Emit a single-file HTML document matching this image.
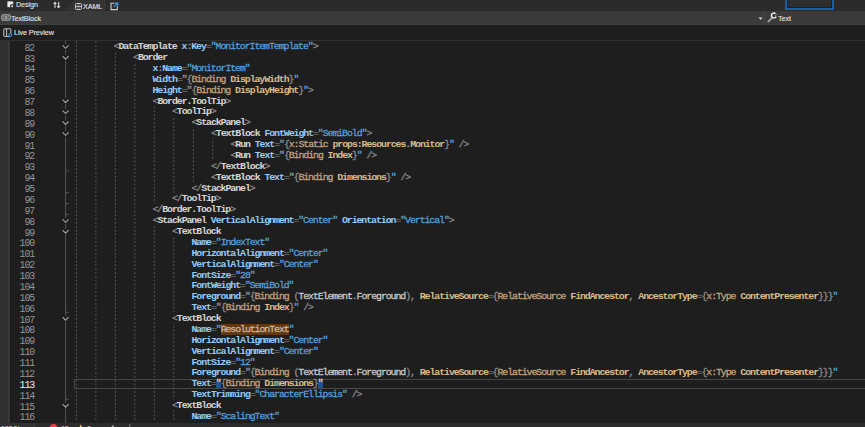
<!DOCTYPE html>
<html><head><meta charset="utf-8"><style>
*{margin:0;padding:0;box-sizing:border-box}
body{width:865px;height:427px;overflow:hidden;background:#1e1e1e;position:relative;font-family:"Liberation Sans",sans-serif}
.abs{position:absolute}
.ui{white-space:pre;font-family:"Liberation Sans",sans-serif;transform:scaleX(0.9);transform-origin:0 0;-webkit-text-stroke:0.12px currentColor}
.code{position:absolute;font-family:"Liberation Mono",monospace;font-size:9.900px;letter-spacing:-1.070px;font-weight:normal;white-space:pre;color:#c8c8c8;transform:scaleY(1.0);transform-origin:0 8px;-webkit-text-stroke:0.3px currentColor}
.ln{position:absolute;height:10.88px;line-height:10.88px}
.num{position:absolute;left:0;width:34.2px;font-family:"Liberation Mono",monospace;font-size:9.900px;letter-spacing:-1.070px;color:#858585;text-align:right;white-space:pre;transform:scaleY(1.12);transform-origin:0 8.1px}
.a,.n,.p{font-weight:bold;-webkit-text-stroke:0.05px currentColor}.d{color:#8a8a8a}.e{color:#6a6a6a}.n{color:#d4d4d4}.a{color:#92caf4}.v{color:#569cd6}.q{color:#569cd6}.b{color:#8c8c8c}.c{color:#c2a07e}.qg{color:#959595}.p{color:#d7b98a}.t{color:#c8c8c8}
.hl{background:#613712;color:#c8b6a4}
.qh{background:linear-gradient(to bottom,transparent 2.7px,#1c5590 2.7px,#1c5590 9.9px,transparent 9.9px);color:#d4d4d4}
.g{position:absolute;width:1px;background:repeating-linear-gradient(to bottom,#4a4a4a 0,#4a4a4a 2px,transparent 2px,transparent 4px)}
</style></head><body>
<div class="abs" style="left:0;top:0;width:865px;height:10.5px;background:#2b2b2b"></div>
<svg class="abs" style="left:0;top:0" width="865" height="11"><path d="M64 10.5 L75.5 0 L105.6 0 L105.6 10.5 Z" fill="#353535"/></svg>
<div class="abs" style="left:0;top:10.5px;width:865px;height:14.1px;background:#3a3a3a"></div>
<div class="abs" style="left:0;top:24.6px;width:865px;height:15.4px;background:#1f1f1f"></div>
<div class="abs" style="left:0;top:23.6px;width:865px;height:1px;background:#404040"></div>
<div class="abs" style="left:0;top:40px;width:865px;height:1px;background:#303030"></div>
<div class="abs" style="left:784.5px;top:-3px;width:49.3px;height:12.7px;border:2px solid #1262aa;background:#2e2e2e;box-shadow:inset 0 0 0 0.7px #1a1a1a"></div>
<div class="abs" style="left:763.1px;top:10.8px;width:2.6px;height:13.6px;background:#3e3e3e"></div>
<div class="abs ui" style="left:15.60px;top:0.66px;font-size:8.00px;line-height:8.00px;letter-spacing:-0.10px;color:#e4e4e4;">Design</div>
<div class="abs ui" style="left:83.30px;top:3.06px;font-size:8.00px;line-height:8.00px;letter-spacing:-0.10px;color:#e4e4e4;">XAML</div>
<div class="abs ui" style="left:11.10px;top:14.96px;font-size:8.00px;line-height:8.00px;letter-spacing:-0.10px;color:#e4e4e4;">TextBlock</div>
<div class="abs ui" style="left:14.40px;top:28.96px;font-size:8.00px;line-height:8.00px;letter-spacing:-0.10px;color:#e4e4e4;">Live Preview</div>
<div class="abs ui" style="left:777.80px;top:14.86px;font-size:8.00px;line-height:8.00px;letter-spacing:-0.10px;color:#e4e4e4;">Text</div>
<svg class="abs" style="left:6px;top:0px" width="9" height="9" viewBox="0 0 9 9"><rect x="1.3" y="1.3" width="6" height="6" rx="0.9" fill="#cfcfcf"/><rect x="2.1" y="2.1" width="4.4" height="4.4" fill="#ededed"/><circle cx="6.1" cy="6.2" r="2.1" fill="#2b2b2b"/><circle cx="6.1" cy="6.2" r="1.0" fill="#e8e8e8"/></svg>
<svg class="abs" style="left:52.5px;top:1px" width="8" height="8" viewBox="0 0 8 8"><path d="M2 7 V1.5 M0.6 3 L2 1.3 L3.4 3" fill="none" stroke="#d8d8d8" stroke-width="1.1"/><path d="M5.6 1 V6.5 M4.2 5 L5.6 6.7 L7 5" fill="none" stroke="#d8d8d8" stroke-width="1.1"/></svg>
<svg class="abs" style="left:74px;top:2px" width="9" height="9" viewBox="0 0 9 9"><rect x="1.5" y="1.5" width="6" height="6" rx="0.9" fill="none" stroke="#c8c8c8" stroke-width="1"/><path d="M1.5 4.5 H7.5" stroke="#c8c8c8" stroke-width="0.9"/><path d="M3.2 3 H5.8 M3.2 6 H5.8" stroke="#9a9a9a" stroke-width="0.7"/></svg>
<svg class="abs" style="left:109.5px;top:1.5px" width="9" height="9" viewBox="0 0 9 9"><path d="M4.5 1.3 H1 V7.6 H7.3 V4.2" fill="none" stroke="#d0d0d0" stroke-width="1.1"/><path d="M3.6 5.2 L7.6 1.2 M5 1.1 H7.8 V3.8" fill="none" stroke="#3a9be8" stroke-width="1.1"/></svg>
<svg class="abs" style="left:0.5px;top:14px" width="10" height="7" viewBox="0 0 10 7"><rect x="0.9" y="0.9" width="8.3" height="5.2" rx="0.8" fill="none" stroke="#c8c8c8" stroke-width="1"/><rect x="2.3" y="2.3" width="1.3" height="1" fill="#c8c8c8"/><rect x="2.3" y="3.8" width="1.3" height="1" fill="#c8c8c8"/><rect x="6.4" y="2.3" width="1.3" height="1" fill="#c8c8c8"/><rect x="6.4" y="3.8" width="1.3" height="1" fill="#c8c8c8"/><rect x="4.2" y="2.3" width="1.6" height="2.5" fill="#c8c8c8"/></svg>
<svg class="abs" style="left:2.5px;top:27.5px" width="10" height="10" viewBox="0 0 10 10"><rect x="0.8" y="0.8" width="7" height="7.6" rx="0.5" fill="none" stroke="#c8c8c8" stroke-width="1"/><path d="M3.6 0.8 V8.4" stroke="#c8c8c8" stroke-width="1"/><circle cx="7.3" cy="6.8" r="1.5" fill="#1f1f1f" stroke="#3a9be8" stroke-width="1"/><path d="M6.2 7.9 L4.9 9.3" stroke="#3a9be8" stroke-width="1.1"/></svg>
<svg class="abs" style="left:757.5px;top:16.5px" width="5" height="3" viewBox="0 0 5 3"><path d="M0.5 0.5 H4.5 L2.5 2.7 Z" fill="#e0e0e0"/></svg>
<svg class="abs" style="left:765px;top:11px" width="12" height="12" viewBox="765 11 12 12"><path d="M768.3 21.6 L772.2 17.6" stroke="#a8a8a8" stroke-width="1.7" stroke-linecap="round"/><path d="M775.6 13.6 A2.5 2.5 0 1 0 776.2 16.6" fill="none" stroke="#e8e8e8" stroke-width="1.5"/><path d="M775.3 15.6 L776.8 14.2" stroke="#e8e8e8" stroke-width="0.6"/></svg>
<div class="abs" style="left:0;top:41px;width:9.5px;height:382px;background:linear-gradient(to right,#303030 0,#303030 7.8px,#383838 7.8px,#383838 9.5px)"></div>
<div class="abs" style="left:9.5px;top:41px;width:1px;height:382px;background:#1a1a1a"></div>
<div class="abs" style="left:0;top:422.7px;width:865px;height:5px;background:#2c2c2c"></div>
<div class="abs" style="left:0;top:422.7px;width:34px;height:5px;background:#323232"></div>
<div class="abs" style="left:33.5px;top:422.7px;width:1px;height:5px;background:#3a3a3a"></div>
<div class="abs ui" style="left:0.50px;top:424.96px;font-size:8.00px;line-height:8.00px;letter-spacing:-0.30px;color:#d8d8d8;">100 %</div>
<div class="abs ui" style="left:60.50px;top:424.96px;font-size:8.00px;line-height:8.00px;letter-spacing:-0.30px;color:#d0d0d0;">15</div>
<div class="abs ui" style="left:86.50px;top:424.96px;font-size:8.00px;line-height:8.00px;letter-spacing:-0.30px;color:#d0d0d0;">0</div>
<svg class="abs" style="left:0;top:422px" width="200" height="6" viewBox="0 422 200 6"><circle cx="53.5" cy="427.6" r="3.6" fill="#e8414b"/><path d="M78.6 429 L80.7 424.3 L82.8 429 Z" fill="#e8c860"/><path d="M110.5 428 L112.8 424.8 L115.1 428 Z" fill="#9a9a9a"/><line x1="129.8" y1="424" x2="129.8" y2="428" stroke="#808080" stroke-width="1"/></svg>
<div class="abs" style="left:74.2px;top:378.5px;width:800px;height:10px;border:1px solid #464646"></div>
<svg class="abs" style="left:0;top:0" width="865" height="423" viewBox="0 0 865 423"><line x1="76.40" y1="40.40" x2="76.40" y2="421.02" stroke="#585858" stroke-width="1" stroke-dasharray="1.923 1.923" stroke-dashoffset="3.007"/><line x1="95.88" y1="40.40" x2="95.88" y2="421.02" stroke="#585858" stroke-width="1" stroke-dasharray="1.923 1.923" stroke-dashoffset="3.007"/><line x1="115.36" y1="51.27" x2="115.36" y2="421.02" stroke="#585858" stroke-width="1" stroke-dasharray="1.923 1.923" stroke-dashoffset="2.344"/><line x1="134.84" y1="62.15" x2="134.84" y2="421.02" stroke="#585858" stroke-width="1" stroke-dasharray="1.923 1.923" stroke-dashoffset="1.681"/><line x1="154.32" y1="105.65" x2="154.32" y2="203.53" stroke="#585858" stroke-width="1" stroke-dasharray="1.923 1.923" stroke-dashoffset="2.876"/><line x1="154.32" y1="225.28" x2="154.32" y2="421.02" stroke="#585858" stroke-width="1" stroke-dasharray="1.923 1.923" stroke-dashoffset="3.274"/><line x1="173.80" y1="116.53" x2="173.80" y2="192.65" stroke="#585858" stroke-width="1" stroke-dasharray="1.923 1.923" stroke-dashoffset="2.213"/><line x1="173.80" y1="236.15" x2="173.80" y2="312.27" stroke="#585858" stroke-width="1" stroke-dasharray="1.923 1.923" stroke-dashoffset="2.611"/><line x1="173.80" y1="323.15" x2="173.80" y2="399.27" stroke="#585858" stroke-width="1" stroke-dasharray="1.923 1.923" stroke-dashoffset="1.153"/><line x1="173.80" y1="410.15" x2="173.80" y2="421.02" stroke="#585858" stroke-width="1" stroke-dasharray="1.923 1.923" stroke-dashoffset="3.541"/><line x1="193.28" y1="127.40" x2="193.28" y2="181.78" stroke="#585858" stroke-width="1" stroke-dasharray="1.923 1.923" stroke-dashoffset="1.550"/><line x1="212.76" y1="138.28" x2="212.76" y2="160.03" stroke="#585858" stroke-width="1" stroke-dasharray="1.923 1.923" stroke-dashoffset="0.887"/><line x1="65.6" y1="40.5" x2="65.6" y2="423" stroke="#555555" stroke-width="1"/><line x1="65.6" y1="170.90" x2="68.8" y2="170.90" stroke="#555555" stroke-width="1"/><line x1="65.6" y1="192.65" x2="68.8" y2="192.65" stroke="#555555" stroke-width="1"/><line x1="65.6" y1="203.53" x2="68.8" y2="203.53" stroke="#555555" stroke-width="1"/><line x1="65.6" y1="214.40" x2="68.8" y2="214.40" stroke="#555555" stroke-width="1"/><line x1="65.6" y1="312.27" x2="68.8" y2="312.27" stroke="#555555" stroke-width="1"/><line x1="65.6" y1="399.27" x2="68.8" y2="399.27" stroke="#555555" stroke-width="1"/><rect x="61" y="44.00" width="9" height="5.6" fill="#1e1e1e"/><path d="M62.6 45.30 L65.6 48.30 L68.6 45.30" fill="none" stroke="#a8a8a8" stroke-width="1.05"/><rect x="61" y="54.88" width="9" height="5.6" fill="#1e1e1e"/><path d="M62.6 56.17 L65.6 59.17 L68.6 56.17" fill="none" stroke="#a8a8a8" stroke-width="1.05"/><rect x="61" y="98.38" width="9" height="5.6" fill="#1e1e1e"/><path d="M62.6 99.68 L65.6 102.68 L68.6 99.68" fill="none" stroke="#a8a8a8" stroke-width="1.05"/><rect x="61" y="109.25" width="9" height="5.6" fill="#1e1e1e"/><path d="M62.6 110.55 L65.6 113.55 L68.6 110.55" fill="none" stroke="#a8a8a8" stroke-width="1.05"/><rect x="61" y="120.12" width="9" height="5.6" fill="#1e1e1e"/><path d="M62.6 121.43 L65.6 124.43 L68.6 121.43" fill="none" stroke="#a8a8a8" stroke-width="1.05"/><rect x="61" y="131.00" width="9" height="5.6" fill="#1e1e1e"/><path d="M62.6 132.30 L65.6 135.30 L68.6 132.30" fill="none" stroke="#a8a8a8" stroke-width="1.05"/><rect x="61" y="218.00" width="9" height="5.6" fill="#1e1e1e"/><path d="M62.6 219.30 L65.6 222.30 L68.6 219.30" fill="none" stroke="#a8a8a8" stroke-width="1.05"/><rect x="61" y="228.88" width="9" height="5.6" fill="#1e1e1e"/><path d="M62.6 230.18 L65.6 233.18 L68.6 230.18" fill="none" stroke="#a8a8a8" stroke-width="1.05"/><rect x="61" y="315.88" width="9" height="5.6" fill="#1e1e1e"/><path d="M62.6 317.17 L65.6 320.17 L68.6 317.17" fill="none" stroke="#a8a8a8" stroke-width="1.05"/><rect x="61" y="402.88" width="9" height="5.6" fill="#1e1e1e"/><path d="M62.6 404.17 L65.6 407.17 L68.6 404.17" fill="none" stroke="#a8a8a8" stroke-width="1.05"/></svg>
<div class="ln num" style="top:43.70px;color:#959595">82</div>
<div class="ln code" style="left:113.56px;top:42.20px"><span class="d">&lt;</span><span class="n">DataTemplate</span><span class="d"> </span><span class="a">x</span><span class="d">:</span><span class="a">Key</span><span class="e">=</span><span class="q">"</span><span class="v">MonitorItemTemplate</span><span class="q">"</span><span class="d">&gt;</span></div>
<div class="ln num" style="top:54.57px;color:#959595">83</div>
<div class="ln code" style="left:133.04px;top:53.07px"><span class="d">&lt;</span><span class="n">Border</span></div>
<div class="ln num" style="top:65.45px;color:#959595">84</div>
<div class="ln code" style="left:152.52px;top:63.95px"><span class="a">x</span><span class="d">:</span><span class="a">Name</span><span class="e">=</span><span class="q">"</span><span class="v">MonitorItem</span><span class="q">"</span></div>
<div class="ln num" style="top:76.33px;color:#959595">85</div>
<div class="ln code" style="left:152.52px;top:74.83px"><span class="a">Width</span><span class="e">=</span><span class="qg">"</span><span class="b">{</span><span class="c">Binding</span><span class="d"> </span><span class="p">DisplayWidth</span><span class="b">}</span><span class="q">"</span></div>
<div class="ln num" style="top:87.20px;color:#959595">86</div>
<div class="ln code" style="left:152.52px;top:85.70px"><span class="a">Height</span><span class="e">=</span><span class="qg">"</span><span class="b">{</span><span class="c">Binding</span><span class="d"> </span><span class="p">DisplayHeight</span><span class="b">}</span><span class="q">"</span><span class="d">&gt;</span></div>
<div class="ln num" style="top:98.08px;color:#959595">87</div>
<div class="ln code" style="left:152.52px;top:96.58px"><span class="d">&lt;</span><span class="n">Border.ToolTip</span><span class="d">&gt;</span></div>
<div class="ln num" style="top:108.95px;color:#959595">88</div>
<div class="ln code" style="left:172.00px;top:107.45px"><span class="d">&lt;</span><span class="n">ToolTip</span><span class="d">&gt;</span></div>
<div class="ln num" style="top:119.83px;color:#959595">89</div>
<div class="ln code" style="left:191.48px;top:118.33px"><span class="d">&lt;</span><span class="n">StackPanel</span><span class="d">&gt;</span></div>
<div class="ln num" style="top:130.70px;color:#959595">90</div>
<div class="ln code" style="left:210.96px;top:129.20px"><span class="d">&lt;</span><span class="n">TextBlock</span><span class="d"> </span><span class="a">FontWeight</span><span class="e">=</span><span class="q">"</span><span class="v">SemiBold</span><span class="q">"</span><span class="d">&gt;</span></div>
<div class="ln num" style="top:141.58px;color:#959595">91</div>
<div class="ln code" style="left:230.44px;top:140.08px"><span class="d">&lt;</span><span class="n">Run</span><span class="d"> </span><span class="a">Text</span><span class="e">=</span><span class="qg">"</span><span class="b">{</span><span class="c">x:Static</span><span class="d"> </span><span class="p">props:Resources</span><span class="b">.</span><span class="p">Monitor</span><span class="b">}</span><span class="q">"</span><span class="d"> /&gt;</span></div>
<div class="ln num" style="top:152.45px;color:#959595">92</div>
<div class="ln code" style="left:230.44px;top:150.95px"><span class="d">&lt;</span><span class="n">Run</span><span class="d"> </span><span class="a">Text</span><span class="e">=</span><span class="qg">"</span><span class="b">{</span><span class="c">Binding</span><span class="d"> </span><span class="p">Index</span><span class="b">}</span><span class="q">"</span><span class="d"> /&gt;</span></div>
<div class="ln num" style="top:163.33px;color:#959595">93</div>
<div class="ln code" style="left:210.96px;top:161.83px"><span class="d">&lt;/</span><span class="n">TextBlock</span><span class="d">&gt;</span></div>
<div class="ln num" style="top:174.20px;color:#959595">94</div>
<div class="ln code" style="left:210.96px;top:172.70px"><span class="d">&lt;</span><span class="n">TextBlock</span><span class="d"> </span><span class="a">Text</span><span class="e">=</span><span class="qg">"</span><span class="b">{</span><span class="c">Binding</span><span class="d"> </span><span class="p">Dimensions</span><span class="b">}</span><span class="q">"</span><span class="d"> /&gt;</span></div>
<div class="ln num" style="top:185.08px;color:#959595">95</div>
<div class="ln code" style="left:191.48px;top:183.58px"><span class="d">&lt;/</span><span class="n">StackPanel</span><span class="d">&gt;</span></div>
<div class="ln num" style="top:195.95px;color:#959595">96</div>
<div class="ln code" style="left:172.00px;top:194.45px"><span class="d">&lt;/</span><span class="n">ToolTip</span><span class="d">&gt;</span></div>
<div class="ln num" style="top:206.83px;color:#959595">97</div>
<div class="ln code" style="left:152.52px;top:205.33px"><span class="d">&lt;/</span><span class="n">Border.ToolTip</span><span class="d">&gt;</span></div>
<div class="ln num" style="top:217.70px;color:#959595">98</div>
<div class="ln code" style="left:152.52px;top:216.20px"><span class="d">&lt;</span><span class="n">StackPanel</span><span class="d"> </span><span class="a">VerticalAlignment</span><span class="e">=</span><span class="q">"</span><span class="v">Center</span><span class="q">"</span><span class="d"> </span><span class="a">Orientation</span><span class="e">=</span><span class="q">"</span><span class="v">Vertical</span><span class="q">"</span><span class="d">&gt;</span></div>
<div class="ln num" style="top:228.58px;color:#959595">99</div>
<div class="ln code" style="left:172.00px;top:227.08px"><span class="d">&lt;</span><span class="n">TextBlock</span></div>
<div class="ln num" style="top:239.45px;color:#959595">100</div>
<div class="ln code" style="left:191.48px;top:237.95px"><span class="a">Name</span><span class="e">=</span><span class="q">"</span><span class="v">IndexText</span><span class="q">"</span></div>
<div class="ln num" style="top:250.33px;color:#959595">101</div>
<div class="ln code" style="left:191.48px;top:248.83px"><span class="a">HorizontalAlignment</span><span class="e">=</span><span class="q">"</span><span class="v">Center</span><span class="q">"</span></div>
<div class="ln num" style="top:261.20px;color:#959595">102</div>
<div class="ln code" style="left:191.48px;top:259.70px"><span class="a">VerticalAlignment</span><span class="e">=</span><span class="q">"</span><span class="v">Center</span><span class="q">"</span></div>
<div class="ln num" style="top:272.07px;color:#959595">103</div>
<div class="ln code" style="left:191.48px;top:270.57px"><span class="a">FontSize</span><span class="e">=</span><span class="q">"</span><span class="v">28</span><span class="q">"</span></div>
<div class="ln num" style="top:282.95px;color:#959595">104</div>
<div class="ln code" style="left:191.48px;top:281.45px"><span class="a">FontWeight</span><span class="e">=</span><span class="q">"</span><span class="v">SemiBold</span><span class="q">"</span></div>
<div class="ln num" style="top:293.82px;color:#959595">105</div>
<div class="ln code" style="left:191.48px;top:292.32px"><span class="a">Foreground</span><span class="e">=</span><span class="qg">"</span><span class="b">{</span><span class="c">Binding</span><span class="d"> </span><span class="b">(</span><span class="t">TextElement</span><span class="b">.</span><span class="t">Foreground</span><span class="b">)</span><span class="b">,</span><span class="d"> </span><span class="p">RelativeSource</span><span class="e">=</span><span class="b">{</span><span class="c">RelativeSource</span><span class="d"> </span><span class="p">FindAncestor</span><span class="b">,</span><span class="d"> </span><span class="p">AncestorType</span><span class="e">=</span><span class="b">{</span><span class="c">x:Type</span><span class="d"> </span><span class="p">ContentPresenter</span><span class="b">}}}</span><span class="q">"</span></div>
<div class="ln num" style="top:304.70px;color:#959595">106</div>
<div class="ln code" style="left:191.48px;top:303.20px"><span class="a">Text</span><span class="e">=</span><span class="qg">"</span><span class="b">{</span><span class="c">Binding</span><span class="d"> </span><span class="p">Index</span><span class="b">}</span><span class="q">"</span><span class="d"> /&gt;</span></div>
<div class="ln num" style="top:315.57px;color:#959595">107</div>
<div class="ln code" style="left:172.00px;top:314.07px"><span class="d">&lt;</span><span class="n">TextBlock</span></div>
<div class="ln num" style="top:326.45px;color:#959595">108</div>
<div class="ln code" style="left:191.48px;top:324.95px"><span class="a">Name</span><span class="e">=</span><span class="q">"</span><span class="hl">ResolutionText</span><span class="q">"</span></div>
<div class="ln num" style="top:337.32px;color:#959595">109</div>
<div class="ln code" style="left:191.48px;top:335.82px"><span class="a">HorizontalAlignment</span><span class="e">=</span><span class="q">"</span><span class="v">Center</span><span class="q">"</span></div>
<div class="ln num" style="top:348.20px;color:#959595">110</div>
<div class="ln code" style="left:191.48px;top:346.70px"><span class="a">VerticalAlignment</span><span class="e">=</span><span class="q">"</span><span class="v">Center</span><span class="q">"</span></div>
<div class="ln num" style="top:359.07px;color:#959595">111</div>
<div class="ln code" style="left:191.48px;top:357.57px"><span class="a">FontSize</span><span class="e">=</span><span class="q">"</span><span class="v">12</span><span class="q">"</span></div>
<div class="ln num" style="top:369.95px;color:#959595">112</div>
<div class="ln code" style="left:191.48px;top:368.45px"><span class="a">Foreground</span><span class="e">=</span><span class="qg">"</span><span class="b">{</span><span class="c">Binding</span><span class="d"> </span><span class="b">(</span><span class="t">TextElement</span><span class="b">.</span><span class="t">Foreground</span><span class="b">)</span><span class="b">,</span><span class="d"> </span><span class="p">RelativeSource</span><span class="e">=</span><span class="b">{</span><span class="c">RelativeSource</span><span class="d"> </span><span class="p">FindAncestor</span><span class="b">,</span><span class="d"> </span><span class="p">AncestorType</span><span class="e">=</span><span class="b">{</span><span class="c">x:Type</span><span class="d"> </span><span class="p">ContentPresenter</span><span class="b">}}}</span><span class="q">"</span></div>
<div class="ln num" style="top:380.82px;color:#f0f0f0">113</div>
<div class="ln code" style="left:191.48px;top:379.32px"><span class="a">Text</span><span class="e">=</span><span class="qh">"</span><span class="b">{</span><span class="c">Binding</span><span class="d"> </span><span class="p">Dimensions</span><span class="b">}</span><span class="qh">"</span></div>
<div class="ln num" style="top:391.70px;color:#959595">114</div>
<div class="ln code" style="left:191.48px;top:390.20px"><span class="a">TextTrimming</span><span class="e">=</span><span class="q">"</span><span class="v">CharacterEllipsis</span><span class="q">"</span><span class="d"> /&gt;</span></div>
<div class="ln num" style="top:402.57px;color:#959595">115</div>
<div class="ln code" style="left:172.00px;top:401.07px"><span class="d">&lt;</span><span class="n">TextBlock</span></div>
<div class="ln num" style="top:413.45px;color:#959595">116</div>
<div class="ln code" style="left:191.48px;top:411.95px"><span class="a">Name</span><span class="e">=</span><span class="q">"</span><span class="v">ScalingText</span><span class="q">"</span></div>
</body></html>
